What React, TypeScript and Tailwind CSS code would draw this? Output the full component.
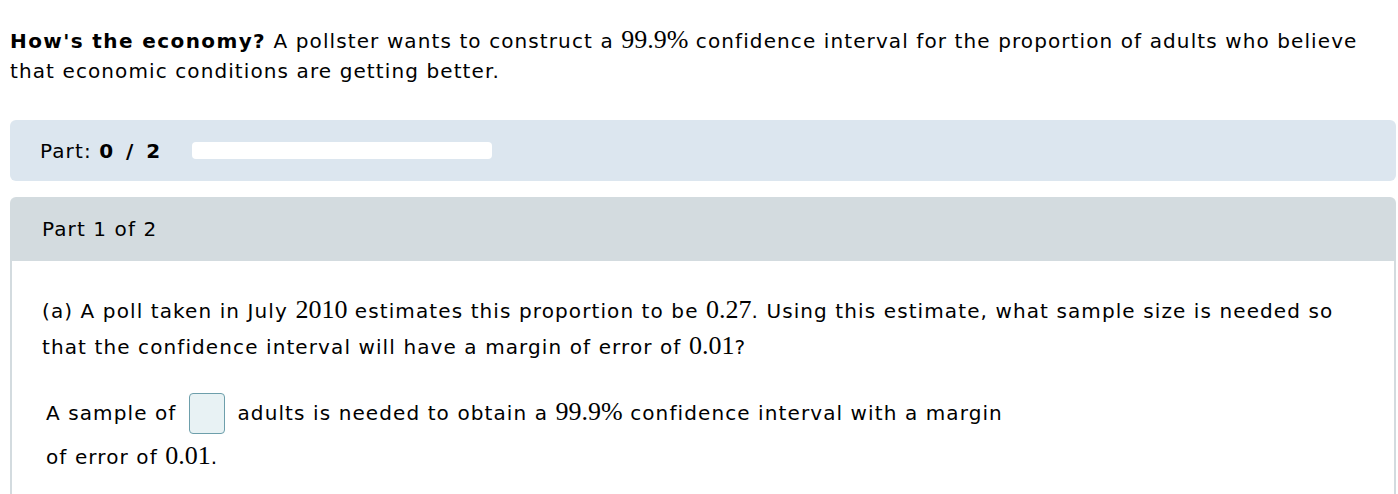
const serif = "font-['Liberation_Serif',serif] text-[26px] tracking-normal leading-none";

const M = ({ children }: { children: React.ReactNode }) => (
  <span className={serif}>{children}</span>
);

export default function App() {
  return (
    <div className="w-[1398px] h-[494px] overflow-hidden bg-white text-black font-['DejaVu_Sans',Verdana,sans-serif] text-[20px] tracking-[1.1px]">
      <p className="px-[10px] pt-[26px] leading-[30px]">
        <b className="tracking-[1.4px]">How's the economy?</b> A pollster wants to construct a{" "}
        <M>99.9%</M> confidence interval for the proportion of adults who believe that
        economic conditions are getting better.
      </p>

      <div className="mt-[34px] mx-[10px] mr-[2px] h-[61px] rounded-md bg-[#dce6ef] flex items-center px-[30px]">
        <span>
          Part: <b className="tracking-[3px]">0 / 2</b>
        </span>
        <div className="ml-[29px] w-[300px] h-[17px] rounded bg-white" />
      </div>

      <div className="mt-[16px] ml-[10px] mr-[2px]">
        <div className="h-[64px] rounded-t-md bg-[#d3dbdf] flex items-center px-[32px]">
          Part 1 of 2
        </div>
        <div className="border-x-2 border-[#d3dbdf] h-[240px] px-[30px] pt-[32px]">
          <p className="leading-[36px]">
            (a) A poll taken in July <M>2010</M> estimates this proportion to be <M>0.27</M>.
            Using this estimate, what sample size is needed so that the confidence interval
            will have a margin of error of <M>0.01</M>?
          </p>
          <div className="mt-[25px] pl-[4px] leading-[43px] flex flex-col">
            <div className="flex items-center h-[47px]">
              <span>A sample of</span>
              <span className="w-[36px] h-[41px] ml-[12px] mr-[13px] rounded-[4px] border border-[#6d9fab] bg-[#e8f2f4]" />
              <span>
                adults is needed to obtain a <M>99.9%</M> confidence interval with a margin
              </span>
            </div>
            <div className="leading-[40px]">
              of error of <M>0.01</M>.
            </div>
          </div>
        </div>
      </div>
    </div>
  );
}
